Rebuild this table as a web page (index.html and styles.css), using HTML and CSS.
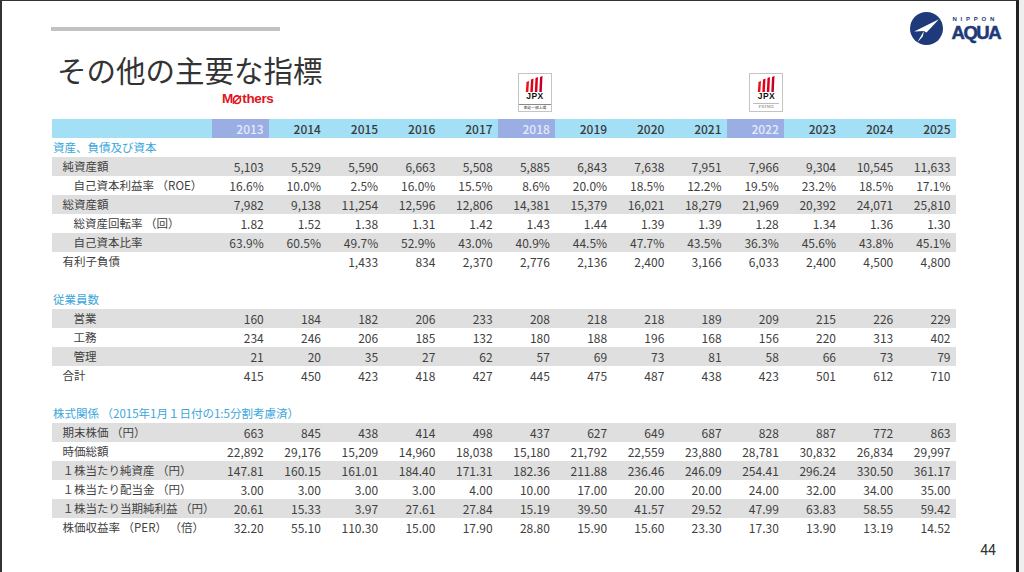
FILE: index.html
```html
<!DOCTYPE html>
<html lang="ja">
<head>
<meta charset="utf-8">
<title>その他の主要な指標</title>
<link rel="stylesheet" href="styles.css">
</head>
<body>
<div class="slide">
  <header class="topbar">
    <div class="accent-bar"></div>
    <div class="brand">
      <svg class="brand-mark" viewBox="0 0 32 32" width="33" height="33">
        <circle cx="16" cy="16" r="16" fill="#1f3a7a"/>
        <polygon points="28,7 4,19 13.5,18.5 7,29.5" fill="#fff"/>
        <polygon points="13.5,18.5 17,20.5 12,26" fill="#1f3a7a"/>
      </svg>
      <div class="brand-text">
        <span class="brand-small">NIPPON</span>
        <span class="brand-big">AQUA</span>
      </div>
    </div>
  </header>

  <div class="titlegrid">
    <h1 class="title">その他の主要な指標</h1>
    <div class="mothers">
      <span>M</span><svg class="mothers-o" viewBox="0 0 12 12" width="10" height="11"><ellipse cx="6" cy="6.2" rx="4.2" ry="4.6" fill="none" stroke="#e2141e" stroke-width="2"/><path d="M1 11 L11 1.5" stroke="#e2141e" stroke-width="1.6"/></svg><span>thers</span>
    </div>
    <div class="jpx jpx-a">
      <svg class="jpx-mark" viewBox="0 0 19 16" width="19" height="16">
        <polygon points="1.5,6 4,5 3.3,16 0.8,16" fill="#e8101a"/>
        <polygon points="6,3.5 8.5,2.5 7.8,16 5.3,16" fill="#e60012"/>
        <polygon points="10.5,2 13,1 12.3,16 9.8,16" fill="#d8001c"/>
        <polygon points="15,1 17.5,0 16.8,16 14.3,16" fill="#c4002a"/>
      </svg>
      <span class="jpx-word">JPX</span>
      <span class="jpx-tag">東証一部上場</span>
    </div>
    <div class="jpx jpx-b">
      <svg class="jpx-mark" viewBox="0 0 19 16" width="19" height="16">
        <polygon points="1.5,6 4,5 3.3,16 0.8,16" fill="#e8101a"/>
        <polygon points="6,3.5 8.5,2.5 7.8,16 5.3,16" fill="#e60012"/>
        <polygon points="10.5,2 13,1 12.3,16 9.8,16" fill="#d8001c"/>
        <polygon points="15,1 17.5,0 16.8,16 14.3,16" fill="#c4002a"/>
      </svg>
      <span class="jpx-word">JPX</span>
      <span class="jpx-prime">PRIME</span>
    </div>
  </div>

  <div class="table">
    <div class="row head"><span class="lbl"></span><span class="hl">2013</span><span>2014</span><span>2015</span><span>2016</span><span>2017</span><span class="hl">2018</span><span>2019</span><span>2020</span><span>2021</span><span class="hl">2022</span><span>2023</span><span>2024</span><span>2025</span></div>

    <div class="row sec"><span class="lbl">資産、負債及び資本</span></div>
    <div class="row band"><span class="lbl l1">純資産額</span><span>5,103</span><span>5,529</span><span>5,590</span><span>6,663</span><span>5,508</span><span>5,885</span><span>6,843</span><span>7,638</span><span>7,951</span><span>7,966</span><span>9,304</span><span>10,545</span><span>11,633</span></div>
    <div class="row"><span class="lbl l2">自己資本利益率 （ROE）</span><span>16.6%</span><span>10.0%</span><span>2.5%</span><span>16.0%</span><span>15.5%</span><span>8.6%</span><span>20.0%</span><span>18.5%</span><span>12.2%</span><span>19.5%</span><span>23.2%</span><span>18.5%</span><span>17.1%</span></div>
    <div class="row band"><span class="lbl l1">総資産額</span><span>7,982</span><span>9,138</span><span>11,254</span><span>12,596</span><span>12,806</span><span>14,381</span><span>15,379</span><span>16,021</span><span>18,279</span><span>21,969</span><span>20,392</span><span>24,071</span><span>25,810</span></div>
    <div class="row"><span class="lbl l2">総資産回転率 （回）</span><span>1.82</span><span>1.52</span><span>1.38</span><span>1.31</span><span>1.42</span><span>1.43</span><span>1.44</span><span>1.39</span><span>1.39</span><span>1.28</span><span>1.34</span><span>1.36</span><span>1.30</span></div>
    <div class="row band"><span class="lbl l2">自己資本比率</span><span>63.9%</span><span>60.5%</span><span>49.7%</span><span>52.9%</span><span>43.0%</span><span>40.9%</span><span>44.5%</span><span>47.7%</span><span>43.5%</span><span>36.3%</span><span>45.6%</span><span>43.8%</span><span>45.1%</span></div>
    <div class="row"><span class="lbl l1">有利子負債</span><span></span><span></span><span>1,433</span><span>834</span><span>2,370</span><span>2,776</span><span>2,136</span><span>2,400</span><span>3,166</span><span>6,033</span><span>2,400</span><span>4,500</span><span>4,800</span></div>
    <div class="row blank"></div>

    <div class="row sec"><span class="lbl">従業員数</span></div>
    <div class="row band"><span class="lbl l2">営業</span><span>160</span><span>184</span><span>182</span><span>206</span><span>233</span><span>208</span><span>218</span><span>218</span><span>189</span><span>209</span><span>215</span><span>226</span><span>229</span></div>
    <div class="row"><span class="lbl l2">工務</span><span>234</span><span>246</span><span>206</span><span>185</span><span>132</span><span>180</span><span>188</span><span>196</span><span>168</span><span>156</span><span>220</span><span>313</span><span>402</span></div>
    <div class="row band"><span class="lbl l2">管理</span><span>21</span><span>20</span><span>35</span><span>27</span><span>62</span><span>57</span><span>69</span><span>73</span><span>81</span><span>58</span><span>66</span><span>73</span><span>79</span></div>
    <div class="row"><span class="lbl l1">合計</span><span>415</span><span>450</span><span>423</span><span>418</span><span>427</span><span>445</span><span>475</span><span>487</span><span>438</span><span>423</span><span>501</span><span>612</span><span>710</span></div>
    <div class="row blank"></div>

    <div class="row sec"><span class="lbl">株式関係 （2015年1月１日付の1:5分割考慮済）</span></div>
    <div class="row band"><span class="lbl l1">期末株価 （円）</span><span>663</span><span>845</span><span>438</span><span>414</span><span>498</span><span>437</span><span>627</span><span>649</span><span>687</span><span>828</span><span>887</span><span>772</span><span>863</span></div>
    <div class="row"><span class="lbl l1">時価総額</span><span>22,892</span><span>29,176</span><span>15,209</span><span>14,960</span><span>18,038</span><span>15,180</span><span>21,792</span><span>22,559</span><span>23,880</span><span>28,781</span><span>30,832</span><span>26,834</span><span>29,997</span></div>
    <div class="row band"><span class="lbl l1">１株当たり純資産 （円）</span><span>147.81</span><span>160.15</span><span>161.01</span><span>184.40</span><span>171.31</span><span>182.36</span><span>211.88</span><span>236.46</span><span>246.09</span><span>254.41</span><span>296.24</span><span>330.50</span><span>361.17</span></div>
    <div class="row"><span class="lbl l1">１株当たり配当金 （円）</span><span>3.00</span><span>3.00</span><span>3.00</span><span>3.00</span><span>4.00</span><span>10.00</span><span>17.00</span><span>20.00</span><span>20.00</span><span>24.00</span><span>32.00</span><span>34.00</span><span>35.00</span></div>
    <div class="row band"><span class="lbl l1">１株当たり当期純利益 （円）</span><span>20.61</span><span>15.33</span><span>3.97</span><span>27.61</span><span>27.84</span><span>15.19</span><span>39.50</span><span>41.57</span><span>29.52</span><span>47.99</span><span>63.83</span><span>58.55</span><span>59.42</span></div>
    <div class="row"><span class="lbl l1">株価収益率 （PER） （倍）</span><span>32.20</span><span>55.10</span><span>110.30</span><span>15.00</span><span>17.90</span><span>28.80</span><span>15.90</span><span>15.60</span><span>23.30</span><span>17.30</span><span>13.90</span><span>13.19</span><span>14.52</span></div>
  </div>

  <div class="pageno">44</div>
</div>
</body>
</html>
```

FILE: styles.css
```css
* { box-sizing: border-box; }

html, body {
  margin: 0;
  padding: 0;
}

body {
  background: #efefef;
  font-family: "Noto Sans CJK JP", "Noto Sans", sans-serif;
  color: #3f3f3f;
}

.slide {
  width: 1019px;
  height: 572px;
  background: #ffffff;
  border-left: 2px solid #333333;
  border-top: 1px solid #333333;
  border-right: 3px solid #222222;
  overflow: hidden;
}

/* top bar */
.topbar {
  display: flex;
  align-items: center;
  padding: 10px 16px 0 49px;
  height: 44px;
}

.accent-bar {
  width: 229px;
  height: 4px;
  margin-top: 2px;
  background: #c2c2c2;
}

.brand {
  margin-left: auto;
  display: flex;
  align-items: center;
  gap: 9px;
}

.brand-mark {
  display: block;
}

.brand-text {
  display: flex;
  flex-direction: column;
  align-items: flex-start;
  color: #1f3a7a;
  font-family: "Liberation Sans", Arial, sans-serif;
  font-weight: 700;
}

.brand-small {
  font-size: 6px;
  line-height: 9px;
  letter-spacing: 3.75px;
  padding-left: 1px;
}

.brand-big {
  font-size: 18.5px;
  line-height: 17px;
  letter-spacing: -1.5px;
  -webkit-text-stroke: 0.5px #1f3a7a;
}

/* title + listing logos */
.titlegrid {
  display: grid;
  grid-template-columns: 160px repeat(13, 1fr);
  grid-template-rows: 8px 32px 34px;
  width: 904px;
  margin-left: 50px;
  height: 74px;
}

.title {
  grid-column: 1 / 6;
  grid-row: 2;
  margin: 0;
  padding-left: 5px;
  font-size: 29.5px;
  line-height: 32px;
  font-weight: 400;
  color: #333333;
  white-space: nowrap;
}

.mothers {
  grid-column: 2;
  grid-row: 3;
  align-self: end;
  margin: 0 0 13px 10px;
  display: flex;
  align-items: center;
  font-family: "Liberation Sans", Arial, sans-serif;
  font-weight: 700;
  font-size: 13.5px;
  line-height: 14px;
  letter-spacing: -0.4px;
  color: #e2141e;
  white-space: nowrap;
}

.mothers-o {
  display: block;
  margin: 0 0.5px 0 -1px;
}

.jpx {
  grid-row: 1 / 4;
  align-self: end;
  width: 34px;
  height: 39px;
  margin-bottom: 7px;
  border: 1px solid #c4c4c4;
  background: #fff;
  display: flex;
  flex-direction: column;
  align-items: center;
  padding-top: 2px;
  white-space: nowrap;
}

.jpx-a { grid-column: 7; margin-left: 17px; }
.jpx-b { grid-column: 11; margin-left: 21px; }

.jpx-mark { display: block; }

.jpx-word {
  font-family: "Liberation Sans", Arial, sans-serif;
  font-weight: 700;
  font-size: 8.5px;
  line-height: 9px;
  letter-spacing: 0.4px;
  color: #111;
}

.jpx-tag {
  margin-top: 3px;
  width: 32px;
  border-top: 1px solid #888;
  text-align: center;
  font-size: 3.8px;
  line-height: 6px;
  color: #333;
}

.jpx-prime {
  margin-top: 2px;
  width: 26px;
  border-top: 1px solid #bdbdbd;
  text-align: center;
  font-family: "Liberation Serif", serif;
  font-size: 4.5px;
  line-height: 6px;
  letter-spacing: 0.4px;
  color: #777;
}

/* data table */
.table {
  width: 904px;
  margin-left: 50px;
}

.row {
  display: grid;
  grid-template-columns: 160px repeat(13, 1fr);
  align-items: center;
  height: 19px;
  font-size: 12px;
  line-height: 19px;
  white-space: nowrap;
}

.row > span {
  display: block;
  height: 19px;
  text-align: right;
  padding-right: 5.5px;
}

.row > .lbl {
  text-align: left;
  font-size: 11.5px;
  padding-right: 0;
}

.lbl.l1 { padding-left: 10.5px; }
.lbl.l2 { padding-left: 21.5px; }

.band { background: #dfdfdf; }

.head {
  background: #a3e0f6;
  font-weight: 500;
  color: #3a3a3a;
}

.head > .hl {
  background: #9aaee4;
  color: #e4eafb;
}

.sec > .lbl {
  grid-column: 1 / -1;
  padding-left: 1px;
  color: #3aa6da;
}

/* page number */
.pageno {
  text-align: right;
  padding-right: 20px;
  margin-top: 5px;
  font-family: Roboto, "Liberation Sans", sans-serif;
  font-size: 14px;
  line-height: 16px;
  color: #333;
}
```
